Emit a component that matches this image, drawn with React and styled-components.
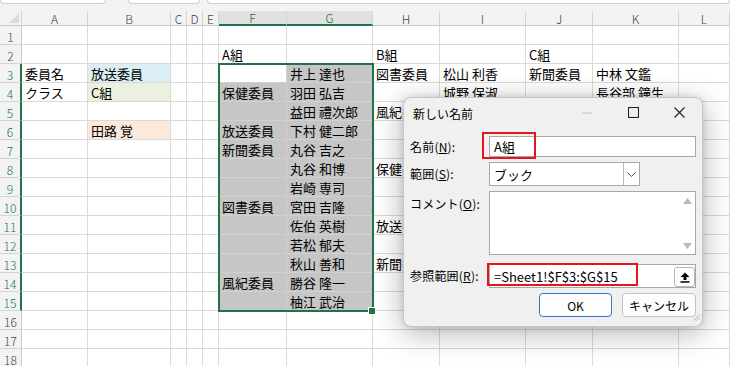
import React from "react";
import styled, { createGlobalStyle } from "styled-components";

const GlobalStyle = createGlobalStyle`
  html, body {
    margin: 0;
    padding: 0;
    background: #ffffff;
    overflow: hidden;
  }
  * {
    box-sizing: border-box;
  }
`;

const JP = `"Noto Sans CJK JP", "Noto Sans", sans-serif`;
const GREEN = "#217346";

const columns = [
  { k: "A", w: 66 },
  { k: "B", w: 83 },
  { k: "C", w: 16 },
  { k: "D", w: 16 },
  { k: "E", w: 16 },
  { k: "F", w: 68 },
  { k: "G", w: 86 },
  { k: "H", w: 67 },
  { k: "I", w: 86 },
  { k: "J", w: 67 },
  { k: "K", w: 86 },
  { k: "L", w: 51 },
];

const cells = {
  2: { F: "A組", H: "B組", J: "C組" },
  3: { A: "委員名", B: "放送委員", G: "井上 達也", H: "図書委員", I: "松山 利香", J: "新聞委員", K: "中林 文鑑" },
  4: { A: "クラス", B: "C組", F: "保健委員", G: "羽田 弘吉", I: "城野 保淑", K: "長谷部 鐘生" },
  5: { G: "益田 禮次郎", H: "風紀委員" },
  6: { B: "田路 覚", F: "放送委員", G: "下村 健二郎" },
  7: { F: "新聞委員", G: "丸谷 吉之" },
  8: { G: "丸谷 和博", H: "保健委員" },
  9: { G: "岩崎 専司" },
  10: { F: "図書委員", G: "宮田 吉隆" },
  11: { G: "佐伯 英樹", H: "放送委員" },
  12: { G: "若松 郁夫" },
  13: { G: "秋山 善和", H: "新聞委員" },
  14: { F: "風紀委員", G: "勝谷 隆一" },
  15: { G: "柚江 武治" },
};

const fills = {
  "3B": "#daeef3",
  "4B": "#ebf1de",
  "6B": "#fde9d9",
};

const isSelected = (r, c) => r >= 3 && r <= 15 && (c === "F" || c === "G");

const Screen = styled.div`
  position: relative;
  width: 730px;
  height: 366px;
  overflow: hidden;
  background: #ffffff;
`;

const TopStrip = styled.div`
  height: 11px;
  background: #f3f3f3;
  display: flex;
  gap: 0;
  align-items: flex-start;
`;

const FormulaBox = styled.div`
  height: 4px;
  width: ${(p) => p.$w}px;
  margin-left: ${(p) => p.$ml || 0}px;
  background: #ffffff;
  border: 1px solid #d0d0d0;
  border-top: none;
  border-radius: 0 0 4px 4px;
`;

const Sheet = styled.div`
  position: relative;
  display: grid;
  grid-template-columns: 22px ${columns.map((c) => c.w + "px").join(" ")};
  grid-template-rows: 15px repeat(18, 19px);
`;

const Corner = styled.div`
  background: #f3f3f3;
  border-right: 1px solid #d4d4d4;
  border-bottom: 1px solid #c8c8c8;
  position: relative;
  &::after {
    content: "";
    position: absolute;
    right: 2px;
    bottom: 2px;
    border-style: solid;
    border-width: 0 0 10px 10px;
    border-color: transparent transparent #dcdcdc transparent;
  }
`;

const ColHead = styled.div`
  background: ${(p) => (p.$sel ? "#e1e1e1" : "#f3f3f3")};
  color: ${(p) => (p.$sel ? GREEN : "#444")};
  border-right: 1px solid #d4d4d4;
  border-bottom: ${(p) => (p.$sel ? `2px solid ${GREEN}` : "1px solid #c8c8c8")};
  font-family: ${JP};
  font-weight: 300;
  font-size: 12px;
  line-height: 13px;
  display: flex;
  align-items: center;
  justify-content: center;
`;

const RowHead = styled.div`
  background: #f3f3f3;
  color: ${(p) => (p.$sel ? GREEN : "#444")};
  border-right: ${(p) => (p.$sel ? `2px solid ${GREEN}` : "1px solid #c8c8c8")};
  border-bottom: 1px solid #d4d4d4;
  font-family: ${JP};
  font-weight: 300;
  font-size: 12px;
  display: flex;
  align-items: center;
  justify-content: center;
  padding-top: 2px;
`;

const Cell = styled.div`
  background: ${(p) => p.$bg || "transparent"};
  border-right: 1px solid ${(p) => (p.$sel ? "#d0d0d0" : "#dadada")};
  border-bottom: 1px solid ${(p) => (p.$sel ? "#d0d0d0" : "#dadada")};
  font-family: ${JP};
  font-size: 13px;
  color: #000;
  white-space: nowrap;
  padding: 0 0 0 3px;
  display: flex;
  align-items: center;
  overflow: visible;
`;

const SelectionFrame = styled.div`
  position: absolute;
  left: 218px;
  top: 52px;
  width: 156px;
  height: 249px;
  border: 2px solid ${GREEN};
  pointer-events: none;
`;

const FillHandle = styled.div`
  position: absolute;
  left: 368px;
  top: 296px;
  width: 8px;
  height: 8px;
  background: ${GREEN};
  border: 1px solid #ffffff;
`;

const Dialog = styled.div`
  position: absolute;
  left: 403px;
  top: 97px;
  width: 300px;
  height: 230px;
  background: #f0f0f0;
  border: 1px solid #c6c6c6;
  border-radius: 8px;
  box-shadow: 0 6px 30px rgba(0, 0, 0, 0.3), 0 0 6px rgba(0, 0, 0, 0.12);
  font-family: ${JP};
  font-size: 12px;
  color: #000;
  display: flex;
  flex-direction: column;
`;

const TitleBar = styled.div`
  height: 29px;
  display: flex;
  align-items: center;
  padding-left: 9px;
`;

const Title = styled.div`
  flex: 1;
  font-size: 12px;
  padding-top: 2px;
`;

const WinButton = styled.div`
  width: 46px;
  height: 29px;
  display: flex;
  align-items: center;
  justify-content: center;
  color: ${(p) => (p.$disabled ? "#c2c2c2" : "#222")};
`;

const Body = styled.div`
  padding: 9px 6px 0 6px;
  display: flex;
  flex-direction: column;
`;

const FormRow = styled.div`
  display: grid;
  grid-template-columns: 79px 1fr;
  margin-bottom: ${(p) => p.$mb}px;
  position: relative;
`;

const Label = styled.div`
  padding-top: ${(p) => p.$pt || 3}px;
  white-space: nowrap;
  letter-spacing: 0.2px;
`;

const TextBox = styled.div`
  height: ${(p) => p.$h}px;
  width: ${(p) => (p.$w ? p.$w + "px" : "auto")};
  background: #ffffff;
  border: 1px solid #a8a8a8;
  font-size: 13px;
  display: flex;
  align-items: center;
  padding-left: 4px;
  position: relative;
`;

const SelectBox = styled(TextBox)`
  padding-left: 4px;
  justify-content: space-between;
  padding-right: 0;
`;

const ChevronButton = styled.div`
  width: 16px;
  height: 100%;
  border-left: 1px solid #b8b8b8;
  display: flex;
  align-items: center;
  justify-content: center;
`;

const ScrollArrows = styled.div`
  position: absolute;
  right: 3px;
  top: 6px;
  bottom: 5px;
  width: 10px;
  display: flex;
  flex-direction: column;
  justify-content: space-between;
  align-items: center;
`;

const CollapseButton = styled.div`
  position: absolute;
  right: 0;
  top: 2px;
  width: 21px;
  height: 20px;
  border: 1px solid #b8b8b8;
  border-radius: 3px;
  background: #fdfdfd;
  display: flex;
  align-items: center;
  justify-content: center;
`;

const Highlight = styled.div`
  position: absolute;
  left: ${(p) => p.$x}px;
  top: ${(p) => p.$y}px;
  width: ${(p) => p.$w}px;
  height: ${(p) => p.$h}px;
  border: 2px solid #e8141e;
  pointer-events: none;
`;

const ButtonRow = styled.div`
  display: flex;
  justify-content: flex-end;
  gap: 10px;
`;

const PushButton = styled.div`
  width: ${(p) => p.$w}px;
  height: 24px;
  border: 1px solid ${(p) => (p.$primary ? "#2b7bd2" : "#c4c4c4")};
  border-radius: 4px;
  background: #fdfdfd;
  display: flex;
  align-items: center;
  justify-content: center;
  font-size: 12px;
`;

const Grip = styled.div`
  position: absolute;
  right: 2px;
  bottom: 2px;
`;

function Spreadsheet() {
  const rows = Array.from({ length: 18 }, (_, i) => i + 1);
  return (
    <Sheet>
      <Corner />
      {columns.map((c) => (
        <ColHead key={c.k} $sel={c.k === "F" || c.k === "G"}>
          {c.k}
        </ColHead>
      ))}
      {rows.map((r) => (
        <React.Fragment key={r}>
          <RowHead $sel={r >= 3 && r <= 15}>{r}</RowHead>
          {columns.map((c) => {
            const sel = isSelected(r, c.k);
            const active = r === 3 && c.k === "F";
            const bg = fills[r + c.k] || (sel && !active ? "#c6c6c6" : undefined);
            return (
              <Cell key={c.k} $bg={bg} $sel={sel}>
                {(cells[r] && cells[r][c.k]) || ""}
              </Cell>
            );
          })}
        </React.Fragment>
      ))}
      <SelectionFrame />
      <FillHandle />
    </Sheet>
  );
}

function NewNameDialog() {
  return (
    <Dialog>
      <TitleBar>
        <Title>新しい名前</Title>
        <WinButton $disabled>
          <svg width="10" height="2" viewBox="0 0 10 2">
            <rect x="0" y="0.5" width="10" height="1" fill="currentColor" />
          </svg>
        </WinButton>
        <WinButton>
          <svg width="11" height="11" viewBox="0 0 11 11">
            <rect x="0.5" y="0.5" width="10" height="10" fill="none" stroke="currentColor" strokeWidth="1.1" />
          </svg>
        </WinButton>
        <WinButton>
          <svg width="11" height="11" viewBox="0 0 11 11">
            <path d="M0.5 0.5 L10.5 10.5 M10.5 0.5 L0.5 10.5" stroke="currentColor" strokeWidth="1.1" />
          </svg>
        </WinButton>
      </TitleBar>
      <Body>
        <FormRow $mb={5}>
          <Label $pt={2}>
            名前(<u>N</u>):
          </Label>
          <TextBox $h={21}>A組</TextBox>
          <Highlight $x={72} $y={-4} $w={54} $h={27} />
        </FormRow>
        <FormRow $mb={5}>
          <Label>
            範囲(<u>S</u>):
          </Label>
          <SelectBox $h={24} $w={151}>
            ブック
            <ChevronButton>
              <svg width="9" height="5" viewBox="0 0 9 5">
                <path d="M0.5 0.5 L4.5 4.5 L8.5 0.5" fill="none" stroke="#555" strokeWidth="1" />
              </svg>
            </ChevronButton>
          </SelectBox>
        </FormRow>
        <FormRow $mb={9}>
          <Label $pt={4}>
            コメント(<u>O</u>):
          </Label>
          <TextBox $h={64}>
            <ScrollArrows>
              <svg width="9" height="6" viewBox="0 0 9 6">
                <path d="M0 6 L4.5 0 L9 6 Z" fill="#b9b9b9" />
              </svg>
              <svg width="9" height="6" viewBox="0 0 9 6">
                <path d="M0 0 L9 0 L4.5 6 Z" fill="#b9b9b9" />
              </svg>
            </ScrollArrows>
          </TextBox>
        </FormRow>
        <FormRow $mb={5}>
          <Label $pt={3}>
            参照範囲(<u>R</u>):
          </Label>
          <TextBox $h={24}>
            =Sheet1!$F$3:$G$15
            <CollapseButton>
              <svg width="10" height="11" viewBox="0 0 10 11">
                <path d="M5 0.5 L9.5 5 H6.5 V8 H3.5 V5 H0.5 Z" fill="#000" />
                <rect x="0.5" y="9.2" width="9" height="1.5" fill="#000" />
              </svg>
            </CollapseButton>
          </TextBox>
          <Highlight $x={77} $y={-1} $w={151} $h={23} />
        </FormRow>
        <ButtonRow>
          <PushButton $w={73} $primary>
            OK
          </PushButton>
          <PushButton $w={74}>キャンセル</PushButton>
        </ButtonRow>
      </Body>
      <Grip>
        <svg width="7" height="7" viewBox="0 0 7 7">
          <path d="M6.5 1 L1 6.5 M6.5 4 L4 6.5" stroke="#b0b0b0" strokeWidth="1" />
        </svg>
      </Grip>
    </Dialog>
  );
}

export default function App() {
  return (
    <>
      <GlobalStyle />
      <Screen>
        <TopStrip>
          <FormulaBox $w={106} />
          <FormulaBox $w={72} $ml={22} />
          <FormulaBox $w={524} $ml={7} />
        </TopStrip>
        <Spreadsheet />
        <NewNameDialog />
      </Screen>
    </>
  );
}
